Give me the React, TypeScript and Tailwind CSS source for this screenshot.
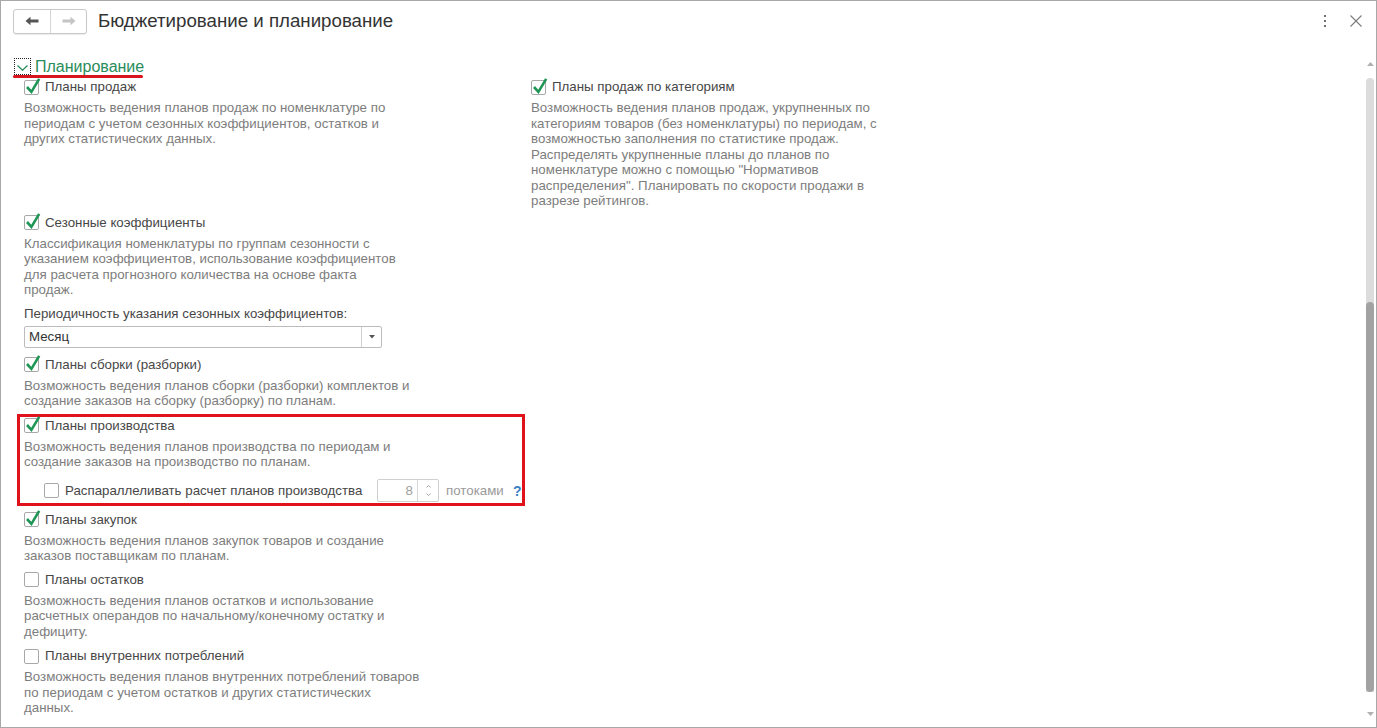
import React from "react";

const Check = ({ checked }: { checked: boolean }) => (
  <span className="relative inline-block w-[15px] h-[15px] border border-[#a8a8a8] rounded-[2px] bg-white shrink-0">
    {checked && (
      <svg
        className="absolute left-0 top-0 overflow-visible"
        width="13"
        height="13"
        viewBox="0 0 13 13"
      >
        <polyline
          points="2,6 6.4,10.8 14.2,-2.2"
          fill="none"
          stroke="#1f9655"
          strokeWidth="2.6"
          strokeLinejoin="miter"
        />
      </svg>
    )}
  </span>
);

const Row = ({ checked, label }: { checked: boolean; label: string }) => (
  <div className="flex items-center h-[16px]">
    <Check checked={checked} />
    <span className="ml-[6px] text-[13.3px] leading-none text-[#474747] whitespace-nowrap">
      {label}
    </span>
  </div>
);

const Desc = ({ lines }: { lines: string[] }) => (
  <div className="mt-[5px] text-[13.3px] leading-[15.5px] text-[#7d7d7d] whitespace-nowrap">
    {lines.map((l, i) => (
      <div key={i}>{l}</div>
    ))}
  </div>
);

export default function App() {
  return (
    <div className="w-[1377px] h-[728px] border border-[#a8a8a8] bg-white flex flex-col overflow-hidden font-['Liberation_Sans',Arial,sans-serif]">
      {/* header */}
      <div className="h-[40px] flex items-center pl-[12px] shrink-0">
        <div className="flex h-[25px] border border-[#c9c9c9] rounded-[3px] bg-white shadow-[0_1px_1px_rgba(0,0,0,0.08)]">
          <div className="w-[37px] flex items-center justify-center border-r border-[#d5d5d5]">
            <svg width="14" height="10" viewBox="0 0 14 10">
              <path d="M0.5 5 L5.5 0.8 L5.5 3.6 L13.5 3.6 L13.5 6.4 L5.5 6.4 L5.5 9.2 Z" fill="#555" />
            </svg>
          </div>
          <div className="w-[35px] flex items-center justify-center">
            <svg width="14" height="10" viewBox="0 0 14 10">
              <path d="M13.5 5 L8.5 0.8 L8.5 3.6 L0.5 3.6 L0.5 6.4 L8.5 6.4 L8.5 9.2 Z" fill="#c4c4c4" />
            </svg>
          </div>
        </div>
        <div className="ml-[11px] text-[18.7px] leading-none text-[#333]">
          Бюджетирование и планирование
        </div>
        <div className="ml-auto flex items-center mr-[14px]">
          <div className="flex flex-col gap-[3px] items-center w-[4px]">
            <span className="w-[2px] h-[2px] bg-[#707070]" />
            <span className="w-[2px] h-[2px] bg-[#707070]" />
            <span className="w-[2px] h-[2px] bg-[#707070]" />
          </div>
          <svg className="ml-[23px]" width="12" height="12" viewBox="0 0 12 12">
            <path d="M0.5 0.5 L11.5 11.5 M11.5 0.5 L0.5 11.5" stroke="#7a7a7a" strokeWidth="1.1" />
          </svg>
        </div>
      </div>

      {/* body */}
      <div className="flex-1 flex">
        <div className="flex-1 pl-[12px] pt-[17px]">
          {/* section header */}
          <div className="flex items-center h-[17px]">
            <div className="ml-[1px] w-[17px] h-[17px] border border-dotted border-[#222] flex items-end justify-center pb-[3px]">
              <svg width="11" height="6" viewBox="0 0 11 6">
                <polyline points="0.5,0.5 5.5,5.2 10.5,0.5" fill="none" stroke="#2a8c5a" strokeWidth="1.3" />
              </svg>
            </div>
            <span className="ml-[4px] text-[16px] leading-none text-[#2a8c5a]">Планирование</span>
          </div>
          <div className="w-[130px] h-[3px] bg-[#d8141c] rounded-full" />

          <div className="pl-[11px] mt-[1px]">
            {/* first row: two columns */}
            <div className="flex">
              <div className="w-[507px]">
                <Row checked label="Планы продаж" />
                <Desc
                  lines={[
                    "Возможность ведения планов продаж по номенклатуре по",
                    "периодам с учетом сезонных коэффициентов, остатков и",
                    "других статистических данных.",
                  ]}
                />
              </div>
              <div>
                <Row checked label="Планы продаж по категориям" />
                <Desc
                  lines={[
                    "Возможность ведения планов продаж, укрупненных по",
                    "категориям товаров (без номенклатуры) по периодам, с",
                    "возможностью заполнения по статистике продаж.",
                    "Распределять укрупненные планы до планов по",
                    "номенклатуре можно с помощью \"Нормативов",
                    "распределения\". Планировать по скорости продажи в",
                    "разрезе рейтингов.",
                  ]}
                />
              </div>
            </div>

            <div className="mt-[6px]">
              <Row checked label="Сезонные коэффициенты" />
              <Desc
                lines={[
                  "Классификация номенклатуры по группам сезонности с",
                  "указанием коэффициентов, использование коэффициентов",
                  "для расчета прогнозного количества на основе факта",
                  "продаж.",
                ]}
              />
            </div>

            <div className="mt-[8px] h-[16px] flex items-center text-[13.3px] leading-none text-[#474747]">
              Периодичность указания сезонных коэффициентов:
            </div>
            <div className="mt-[4px] w-[358px] h-[22px] border border-[#bcbcbc] rounded-[2px] flex bg-white">
              <div className="flex-1 flex items-center pl-[4px] text-[13.3px] leading-none text-[#333]">Месяц</div>
              <div className="w-[20px] border-l border-[#d0d0d0] flex items-center justify-center">
                <svg width="6" height="4" viewBox="0 0 6 4">
                  <path d="M0 0 L6 0 L3 3.5 Z" fill="#555" />
                </svg>
              </div>
            </div>

            <div className="mt-[9px]">
              <Row checked label="Планы сборки (разборки)" />
              <Desc
                lines={[
                  "Возможность ведения планов сборки (разборки) комплектов и",
                  "создание заказов на сборку (разборку) по планам.",
                ]}
              />
            </div>

            {/* highlighted block */}
            <div className="mt-[5px] -ml-[7px] w-[508px] border-[3px] border-[#e0121b] pl-[4px] pt-[1px] pb-[1px]">
              <Row checked label="Планы производства" />
              <Desc
                lines={[
                  "Возможность ведения планов производства по периодам и",
                  "создание заказов на производство по планам.",
                ]}
              />
              <div className="mt-[10px] h-[22px] flex items-center">
                <div className="ml-[20px] flex items-center">
                  <Check checked={false} />
                  <span className="ml-[6px] w-[306px] text-[13.3px] leading-none text-[#474747] whitespace-nowrap">
                    Распараллеливать расчет планов производства
                  </span>
                </div>
                <div className="ml-[6px] w-[62px] h-[23px] border border-[#d0d0d0] rounded-[2px] flex bg-white">
                  <div className="flex-1 flex items-center justify-end pr-[4px] text-[13.3px] leading-none text-[#a0a0a0]">
                    8
                  </div>
                  <div className="w-[21px] border-l border-[#d6d6d6] flex flex-col items-center justify-center gap-[5px]">
                    <svg width="5" height="3" viewBox="0 0 5 3">
                      <polyline points="0.5,2.5 2.5,0.5 4.5,2.5" fill="none" stroke="#9a9a9a" strokeWidth="0.9" />
                    </svg>
                    <svg width="5" height="3" viewBox="0 0 5 3">
                      <polyline points="0.5,0.5 2.5,2.5 4.5,0.5" fill="none" stroke="#9a9a9a" strokeWidth="0.9" />
                    </svg>
                  </div>
                </div>
                <span className="ml-[7px] w-[67px] text-[13.3px] leading-none text-[#9a9a9a]">потоками</span>
                <span className="text-[14px] leading-none font-bold text-[#3b7fc4]">?</span>
              </div>
            </div>

            <div className="mt-[6px]">
              <Row checked label="Планы закупок" />
              <Desc
                lines={[
                  "Возможность ведения планов закупок товаров и создание",
                  "заказов поставщикам по планам.",
                ]}
              />
            </div>

            <div className="mt-[8px]">
              <Row checked={false} label="Планы остатков" />
              <Desc
                lines={[
                  "Возможность ведения планов остатков и использование",
                  "расчетных операндов по начальному/конечному остатку и",
                  "дефициту.",
                ]}
              />
            </div>

            <div className="mt-[9px]">
              <Row checked={false} label="Планы внутренних потреблений" />
              <Desc
                lines={[
                  "Возможность ведения планов внутренних потреблений товаров",
                  "по периодам с учетом остатков и других статистических",
                  "данных.",
                ]}
              />
            </div>
          </div>
        </div>

        {/* scrollbar */}
        <div className="w-[8px] mr-[2px] flex flex-col items-center pt-[21px]">
          <svg width="7" height="4" viewBox="0 0 7 4">
            <path d="M0 4 L3.5 0 L7 4 Z" fill="#b0b0b0" />
          </svg>
          <div className="mt-[12px] w-[8px] h-[614px] bg-[#dcdcdc] rounded-t-[4px] flex flex-col justify-end">
            <div className="h-[390px] w-[8px] bg-[#a2a2a2] rounded-[4px]" />
          </div>
          <svg className="mt-[20px]" width="7" height="4" viewBox="0 0 7 4">
            <path d="M0 0 L7 0 L3.5 4 Z" fill="#b0b0b0" />
          </svg>
        </div>
      </div>
    </div>
  );
}
